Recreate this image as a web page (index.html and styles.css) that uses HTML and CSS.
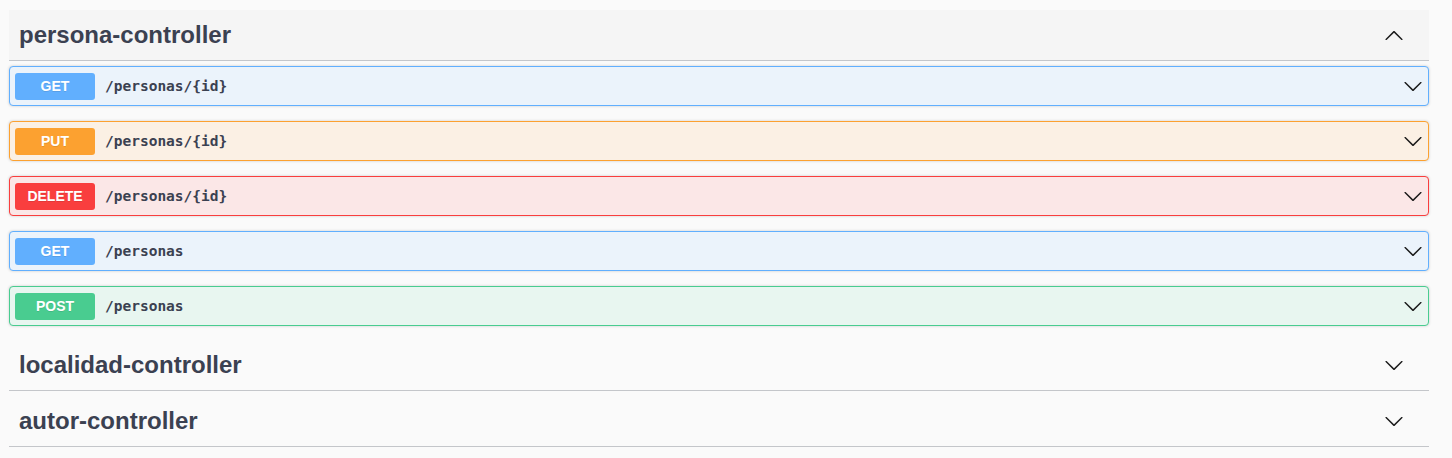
FILE: index.html
```html
<!DOCTYPE html>
<html>
<head>
<meta charset="utf-8">
<link rel="stylesheet" href="styles.css">
</head>
<body>
<div class="wrapper">
  <section class="tag-section">
    <div class="tag-header open">
      <h3 class="tag-title">persona-controller</h3>
      <svg class="arrow" viewBox="0 0 20 20" width="20" height="20"><path d="M17.418 14.891c.272.268.709.268.979 0s.271-.701 0-.969l-7.908-7.83c-.27-.268-.707-.268-.979 0l-7.908 7.83c-.27.268-.27.701 0 .969.271.268.709.268.979 0L10 7.75l7.418 7.141z"/></svg>
    </div>
    <div class="ops">
      <div class="opblock get">
        <span class="method">GET</span><span class="path">/personas/{id}</span>
        <svg class="arrow" viewBox="0 0 20 20" width="20" height="20"><path d="M17.418 6.109c.272-.268.709-.268.979 0s.271.701 0 .969l-7.908 7.83c-.27.268-.707.268-.979 0l-7.908-7.83c-.27-.268-.27-.701 0-.969.271-.268.709-.268.979 0L10 13.25l7.418-7.141z"/></svg>
      </div>
      <div class="opblock put">
        <span class="method">PUT</span><span class="path">/personas/{id}</span>
        <svg class="arrow" viewBox="0 0 20 20" width="20" height="20"><path d="M17.418 6.109c.272-.268.709-.268.979 0s.271.701 0 .969l-7.908 7.83c-.27.268-.707.268-.979 0l-7.908-7.830c-.27-.268-.27-.701 0-.969.271-.268.709-.268.979 0L10 13.25l7.418-7.141z"/></svg>
      </div>
      <div class="opblock delete">
        <span class="method">DELETE</span><span class="path">/personas/{id}</span>
        <svg class="arrow" viewBox="0 0 20 20" width="20" height="20"><path d="M17.418 6.109c.272-.268.709-.268.979 0s.271.701 0 .969l-7.908 7.83c-.27.268-.707.268-.979 0l-7.908-7.83c-.27-.268-.27-.701 0-.969.271-.268.709-.268.979 0L10 13.25l7.418-7.141z"/></svg>
      </div>
      <div class="opblock get">
        <span class="method">GET</span><span class="path">/personas</span>
        <svg class="arrow" viewBox="0 0 20 20" width="20" height="20"><path d="M17.418 6.109c.272-.268.709-.268.979 0s.271.701 0 .969l-7.908 7.83c-.27.268-.707.268-.979 0l-7.908-7.83c-.27-.268-.27-.701 0-.969.271-.268.709-.268.979 0L10 13.25l7.418-7.141z"/></svg>
      </div>
      <div class="opblock post">
        <span class="method">POST</span><span class="path">/personas</span>
        <svg class="arrow" viewBox="0 0 20 20" width="20" height="20"><path d="M17.418 6.109c.272-.268.709-.268.979 0s.271.701 0 .969l-7.908 7.83c-.27.268-.707.268-.979 0l-7.908-7.83c-.27-.268-.27-.701 0-.969.271-.268.709-.268.979 0L10 13.25l7.418-7.141z"/></svg>
      </div>
    </div>
  </section>
  <section class="tag-section">
    <div class="tag-header">
      <h3 class="tag-title">localidad-controller</h3>
      <svg class="arrow" viewBox="0 0 20 20" width="20" height="20"><path d="M17.418 6.109c.272-.268.709-.268.979 0s.271.701 0 .969l-7.908 7.83c-.27.268-.707.268-.979 0l-7.908-7.83c-.27-.268-.27-.701 0-.969.271-.268.709-.268.979 0L10 13.25l7.418-7.141z"/></svg>
    </div>
  </section>
  <section class="tag-section">
    <div class="tag-header">
      <h3 class="tag-title">autor-controller</h3>
      <svg class="arrow" viewBox="0 0 20 20" width="20" height="20"><path d="M17.418 6.109c.272-.268.709-.268.979 0s.271.701 0 .969l-7.908 7.83c-.27.268-.707.268-.979 0l-7.908-7.83c-.27-.268-.27-.701 0-.969.271-.268.709-.268.979 0L10 13.25l7.418-7.141z"/></svg>
    </div>
  </section>
</div>
</body>
</html>
```
FILE: styles.css
```css
html, body {
  margin: 0;
  padding: 0;
  background: #fafafa;
}
body {
  font-family: "Liberation Sans", Arial, sans-serif;
  color: #3b4151;
}
.wrapper {
  width: 1420px;
  margin-left: 9px;
  padding-top: 10px;
}
.tag-section {
  display: flex;
  flex-direction: column;
}
.tag-header {
  display: flex;
  align-items: center;
  justify-content: space-between;
  height: 50px;
  padding: 0 25px 0 10px;
  border-bottom: 1px solid #c4c6ca;
  margin-bottom: 5px;
}
.tag-header.open {
  background: #f5f5f5;
}
.tag-title {
  margin: 0;
  font-size: 24px;
  font-weight: 700;
  color: #3b4151;
}
.arrow {
  fill: #1b1b1b;
  flex: none;
}
.ops {
  display: flex;
  flex-direction: column;
}
.opblock {
  display: flex;
  align-items: center;
  height: 38px;
  padding: 0 5px;
  margin-bottom: 15px;
  border: 1px solid;
  border-radius: 4px;
  box-shadow: 0 0 3px rgba(0, 0, 0, 0.19);
}
.opblock:last-child {
  margin-bottom: 14px;
}
.opblock .arrow {
  margin-left: auto;
}
.method {
  display: flex;
  align-items: center;
  justify-content: center;
  width: 80px;
  height: 27px;
  border-radius: 3px;
  font-size: 14px;
  font-weight: 700;
  color: #fff;
  text-shadow: 0 1px 0 rgba(0, 0, 0, 0.1);
}
.path {
  padding: 0 10px;
  font-family: "DejaVu Sans Mono", "Liberation Mono", monospace;
  font-size: 14.5px;
  font-weight: 700;
  color: #3b4151;
}
.get { border-color: #61affe; background: #ebf3fb; }
.get .method { background: #61affe; }
.put { border-color: #fca130; background: #fbf0e4; }
.put .method { background: #fca130; }
.delete { border-color: #f93e3e; background: #fbe7e7; }
.delete .method { background: #f93e3e; }
.post { border-color: #49cc90; background: #e8f6f0; }
.post .method { background: #49cc90; }
```
